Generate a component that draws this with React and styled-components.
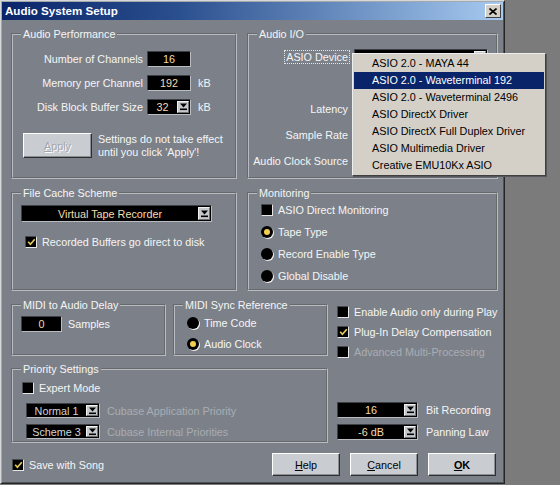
import React from 'react';
import styled, { createGlobalStyle, css } from 'styled-components';

const GlobalStyle = createGlobalStyle`
  html, body { margin: 0; padding: 0; background: #7b7b7b; }
  body {
    font-family: "Liberation Sans", Arial, sans-serif;
    font-size: 10.8px;
    line-height: 12px;
    color: #f5f5f5;
  }
  #root { width: 560px; height: 485px; overflow: hidden; }
`;

const Window = styled.div`
  position: relative;
  width: 505px;
  height: 484px;
  box-sizing: border-box;
  padding: 1px;
  background: #7c8189;
  border: 1px solid;
  border-color: #d6d8da #262626 #262626 #d6d8da;
  box-shadow: inset 1px 1px 0 #a4a8ad, inset -1px -1px 0 #4e5156;
`;

const TitleBar = styled.div`
  height: 18px;
  display: flex;
  align-items: center;
  justify-content: space-between;
  padding: 0 2px 0 3px;
  background: linear-gradient(90deg, #0a246a 0%, #2a4f8e 35%, #a6caf0 100%);
`;

const Title = styled.span`
  font-size: 11.6px;
  font-weight: 700;
  color: #ffffff;
`;

const CloseBtn = styled.span`
  width: 16px;
  height: 14px;
  box-sizing: border-box;
  background: #d4d0c8;
  border: 1px solid;
  border-color: #ffffff #404040 #404040 #ffffff;
  display: flex;
  align-items: center;
  justify-content: center;
`;

const Body = styled.div`
  padding: 8px 5px 0 9px;
`;

const TopGrid = styled.div`
  display: grid;
  grid-template-columns: 226px 251px;
  grid-template-rows: 151px 104px;
  column-gap: 10px;
  row-gap: 8px;
`;

const Group = styled.fieldset`
  margin: 0;
  padding: 0;
  min-width: 0;
  box-sizing: border-box;
  border: 2px groove #b8bcc0;
  ${p => p.$w && css`width: ${p.$w}px;`}
  ${p => p.$h && css`height: ${p.$h}px;`}
`;

const Legend = styled.legend`
  margin-left: 8px;
  padding: 0 2px;
  font-size: 10.8px;
  line-height: 12px;
  color: #f5f5f5;
`;

const GroupBody = styled.div`
  padding: ${p => p.$pad || '0'};
  display: flex;
  flex-direction: ${p => p.$row ? 'row' : 'column'};
  align-items: ${p => p.$row ? 'center' : 'stretch'};
  gap: ${p => p.$gap || 0}px;
`;

const PerfGrid = styled.div`
  display: grid;
  grid-template-columns: 120px 44px auto;
  grid-auto-rows: 16px;
  column-gap: 4px;
  row-gap: 8px;
  align-items: center;
`;

const RightLabel = styled.span`
  text-align: right;
  white-space: nowrap;
`;

const Unit = styled.span`
  padding-left: 3px;
`;

const ValueBox = styled.span`
  width: ${p => p.$w}px;
  height: 16px;
  box-sizing: border-box;
  background: #000;
  border: 1px solid;
  border-color: #3d4046 #b9bdc2 #b9bdc2 #3d4046;
  color: #f3dcae;
  display: flex;
  align-items: center;
  justify-content: center;
  flex: none;
`;

const DropBox = styled.div`
  display: flex;
  align-items: center;
  width: ${p => p.$w}px;
  height: ${p => p.$h || 16}px;
  box-sizing: border-box;
  background: #000;
  border: 1px solid;
  border-color: #3d4046 #b9bdc2 #b9bdc2 #3d4046;
  padding-right: 1px;
  flex: none;
`;

const DropText = styled.span`
  flex: 1;
  min-width: 0;
  text-align: ${p => p.$align || 'center'};
  padding-left: ${p => p.$pad || 0}px;
  color: ${p => p.$dim ? '#d2d4d7' : '#f3dcae'};
  white-space: nowrap;
  overflow: hidden;
`;

const ArrowBtn = styled.span`
  width: 12px;
  height: calc(100% - 2px);
  box-sizing: border-box;
  background: #c6c9cc;
  border: 1px solid;
  border-color: #f2f2f2 #6c6f73 #6c6f73 #f2f2f2;
  display: flex;
  align-items: center;
  justify-content: center;
  flex: none;
`;

const ApplyRow = styled.div`
  display: flex;
  align-items: center;
  gap: 6px;
  margin-top: 18px;
`;

const Note = styled.span`
  line-height: 12.5px;
`;

const Btn = styled.button`
  width: ${p => p.$w || 68}px;
  height: ${p => p.$h || 23}px;
  padding: 0;
  font-family: inherit;
  font-size: 10.8px;
  font-weight: ${p => p.$bold ? 700 : 400};
  color: #000;
  background: #c9ccd0;
  border: 1px solid;
  border-color: #ffffff #2e2e2e #2e2e2e #ffffff;
  box-shadow: inset -1px -1px 0 #8b8f94;
  flex: none;
  &:disabled {
    color: #a3a7ac;
    text-shadow: 1px 1px 0 #ffffff;
  }
`;

const IoGrid = styled.div`
  display: grid;
  grid-template-columns: 101px 134px;
  grid-template-rows: repeat(5, 16px);
  column-gap: 4px;
  row-gap: 10px;
  align-items: center;
  padding-top: 9px;
`;

const IoLabel = styled.span`
  text-align: right;
  padding-right: 2px;
  white-space: nowrap;
`;

const Focus = styled.span`
  border: 1px dotted #e6e6e6;
  padding: 0 1px;
  margin-right: -2px;
`;

const OptionRow = styled.div`
  display: flex;
  align-items: center;
  gap: 5px;
  height: ${p => p.$h || 14}px;
  ${p => p.$indent && css`padding-left: ${p.$indent}px;`}
  color: ${p => p.$dim ? '#a9adb3' : '#f5f5f5'};
  white-space: nowrap;
`;

const CheckBox = styled.span`
  width: 12px;
  height: 12px;
  box-sizing: border-box;
  background: #000;
  border: 1px solid;
  border-color: #45484d #e6e6e6 #e6e6e6 #45484d;
  display: inline-flex;
  align-items: center;
  justify-content: center;
  flex: none;
`;

const Radio = styled.span`
  width: 12px;
  height: 12px;
  border-radius: 50%;
  background: #000;
  box-shadow: 1px 1px 0 #f0f0f0;
  display: inline-flex;
  align-items: center;
  justify-content: center;
  flex: none;
  &::after {
    content: '';
    width: 6px;
    height: 6px;
    border-radius: 50%;
    background: #f2cf4e;
    display: ${p => p.$on ? 'block' : 'none'};
  }
`;

const Lower = styled.div`
  display: flex;
  gap: 9px;
  margin-top: 8px;
`;

const LeftCol = styled.div`
  width: 317px;
  display: flex;
  flex-direction: column;
  gap: 7px;
`;

const MidiRow = styled.div`
  display: flex;
  gap: 7px;
  height: 57px;
`;

const RightCol = styled.div`
  flex: 1;
  display: flex;
  flex-direction: column;
  padding: 3px 0;
`;

const SelectStack = styled.div`
  margin-top: auto;
  display: flex;
  flex-direction: column;
  gap: 6px;
`;

const SelectRow = styled.div`
  display: flex;
  align-items: center;
  gap: ${p => p.$gap || 8}px;
  ${p => p.$indent && css`padding-left: ${p.$indent}px;`}
  color: ${p => p.$dim ? '#a9adb3' : '#f5f5f5'};
  white-space: nowrap;
`;

const PriorityStack = styled.div`
  display: flex;
  flex-direction: column;
  gap: 6px;
  margin-top: 8px;
`;

const BottomRow = styled.div`
  display: flex;
  align-items: center;
  justify-content: space-between;
  height: 23px;
  margin-top: 10px;
  padding: 0 2px 0 1px;
`;

const BtnGroup = styled.div`
  display: flex;
  gap: 10px;
`;

const Popup = styled.div`
  position: absolute;
  left: 351px;
  top: 52px;
  width: 194px;
  box-sizing: border-box;
  padding: 1px;
  background: #d4d0c8;
  border: 1px solid;
  border-color: #eeeeee #404040 #404040 #eeeeee;
  box-shadow: 1px 1px 0 #55585c;
`;

const PopItem = styled.div`
  height: 17px;
  line-height: 17px;
  padding-left: 18px;
  color: ${p => p.$sel ? '#ffffff' : '#000000'};
  background: ${p => p.$sel ? '#0a246a' : 'transparent'};
  white-space: nowrap;
`;

const Arrow = () => (
  <svg width="7" height="8" viewBox="0 0 7 8">
    <path d="M0 0.5h7L3.5 4.5z" fill="#000" />
    <rect x="0" y="5.5" width="7" height="1.6" fill="#000" />
  </svg>
);

const Check = () => (
  <svg width="9" height="8" viewBox="0 0 9 8">
    <path d="M1.2 3.8 L3.4 6.2 L7.8 1.2" stroke="#e2c95a" strokeWidth="1.7" fill="none" />
  </svg>
);

const Dropdown = ({ w, h, value, align, pad, dim }) => (
  <DropBox $w={w} $h={h}>
    <DropText $align={align} $pad={pad} $dim={dim}>{value}</DropText>
    <ArrowBtn><Arrow /></ArrowBtn>
  </DropBox>
);

const CheckOption = ({ checked, children, dim, h, indent }) => (
  <OptionRow $dim={dim} $h={h} $indent={indent}>
    <CheckBox>{checked && <Check />}</CheckBox>
    <span>{children}</span>
  </OptionRow>
);

const RadioOption = ({ on, children }) => (
  <OptionRow>
    <Radio $on={on} />
    <span>{children}</span>
  </OptionRow>
);

const devices = [
  'ASIO 2.0 - MAYA 44',
  'ASIO 2.0 - Waveterminal 192',
  'ASIO 2.0 - Waveterminal 2496',
  'ASIO DirectX Driver',
  'ASIO DirectX Full Duplex Driver',
  'ASIO Multimedia Driver',
  'Creative EMU10Kx ASIO',
];

export default function App() {
  return (
    <>
      <GlobalStyle />
      <Window>
        <TitleBar>
          <Title>Audio System Setup</Title>
          <CloseBtn>
            <svg width="8" height="7" viewBox="0 0 8 7">
              <path d="M0.5 0.5L7.5 6.5M7.5 0.5L0.5 6.5" stroke="#000" strokeWidth="1.6" />
            </svg>
          </CloseBtn>
        </TitleBar>
        <Body>
          <TopGrid>
            <Group>
              <Legend>Audio Performance</Legend>
              <GroupBody $pad="11px 0 0 10px">
                <PerfGrid>
                  <RightLabel>Number of Channels</RightLabel>
                  <ValueBox $w={44}>16</ValueBox>
                  <span />
                  <RightLabel>Memory per Channel</RightLabel>
                  <ValueBox $w={44}>192</ValueBox>
                  <Unit>kB</Unit>
                  <RightLabel>Disk Block Buffer Size</RightLabel>
                  <Dropdown w={44} value="32" />
                  <Unit>kB</Unit>
                </PerfGrid>
                <ApplyRow>
                  <Btn $w={69} $h={25} disabled><u>A</u>pply</Btn>
                  <Note>Settings do not take effect<br />until you click 'Apply'!</Note>
                </ApplyRow>
              </GroupBody>
            </Group>

            <Group>
              <Legend>Audio I/O</Legend>
              <IoGrid>
                <IoLabel><Focus>ASIO Device</Focus></IoLabel>
                <Dropdown w={134} value="ASIO 2.0 - Waveterminal 192" align="left" pad={3} />
                <IoLabel />
                <span />
                <IoLabel>Latency</IoLabel>
                <ValueBox $w={134} />
                <IoLabel>Sample Rate</IoLabel>
                <Dropdown w={134} value="" />
                <IoLabel>Audio Clock Source</IoLabel>
                <Dropdown w={134} value="" />
              </IoGrid>
            </Group>

            <Group>
              <Legend>File Cache Scheme</Legend>
              <GroupBody $pad="6px 0 0 8px" $gap={13}>
                <Dropdown w={191} h={17} value="Virtual Tape Recorder" />
                <CheckOption checked indent={4}>Recorded Buffers go direct to disk</CheckOption>
              </GroupBody>
            </Group>

            <Group>
              <Legend>Monitoring</Legend>
              <GroupBody $pad="4px 0 0 12px" $gap={8}>
                <CheckOption>ASIO Direct Monitoring</CheckOption>
                <RadioOption on>Tape Type</RadioOption>
                <RadioOption>Record Enable Type</RadioOption>
                <RadioOption>Global Disable</RadioOption>
              </GroupBody>
            </Group>
          </TopGrid>

          <Lower>
            <LeftCol>
              <MidiRow>
                <Group $w={155}>
                  <Legend>MIDI to Audio Delay</Legend>
                  <GroupBody $pad="5px 0 0 8px" $row $gap={6}>
                    <ValueBox $w={41}>0</ValueBox>
                    <span>Samples</span>
                  </GroupBody>
                </Group>
                <Group $w={155}>
                  <Legend>MIDI Sync Reference</Legend>
                  <GroupBody $pad="5px 0 0 12px" $gap={7}>
                    <RadioOption>Time Code</RadioOption>
                    <RadioOption on>Audio Clock</RadioOption>
                  </GroupBody>
                </Group>
              </MidiRow>
              <Group $h={80}>
                <Legend>Priority Settings</Legend>
                <GroupBody $pad="6px 0 0 9px">
                  <CheckOption>Expert Mode</CheckOption>
                  <PriorityStack>
                    <SelectRow $dim $gap={7} $indent={4}>
                      <Dropdown w={74} h={15} value="Normal 1" dim />
                      <span>Cubase Application Priority</span>
                    </SelectRow>
                    <SelectRow $dim $gap={7} $indent={4}>
                      <Dropdown w={74} h={15} value="Scheme 3" dim />
                      <span>Cubase Internal Priorities</span>
                    </SelectRow>
                  </PriorityStack>
                </GroupBody>
              </Group>
            </LeftCol>

            <RightCol>
              <CheckOption h={20}>Enable Audio only during Play</CheckOption>
              <CheckOption h={20} checked>Plug-In Delay Compensation</CheckOption>
              <CheckOption h={20} dim>Advanced Multi-Processing</CheckOption>
              <SelectStack>
                <SelectRow>
                  <Dropdown w={81} value="16" />
                  <span>Bit Recording</span>
                </SelectRow>
                <SelectRow>
                  <Dropdown w={81} value="-6 dB" />
                  <span>Panning Law</span>
                </SelectRow>
              </SelectStack>
            </RightCol>
          </Lower>

          <BottomRow>
            <CheckOption checked>Save with Song</CheckOption>
            <BtnGroup>
              <Btn><u>H</u>elp</Btn>
              <Btn><u>C</u>ancel</Btn>
              <Btn $bold><u>O</u>K</Btn>
            </BtnGroup>
          </BottomRow>
        </Body>

        <Popup>
          {devices.map((d, i) => (
            <PopItem key={d} $sel={i === 1}>{d}</PopItem>
          ))}
        </Popup>
      </Window>
    </>
  );
}
